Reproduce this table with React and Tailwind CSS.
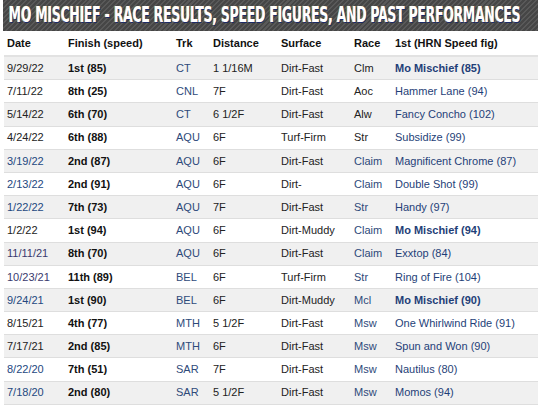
import React from "react";

const BLK = "text-[#222]";
const BLU = "text-[#24487f]";
const PUR = "text-[#3a3a6e]";
const SLT = "text-[#2e4a7a]";

const rows = [
  ["9/29/22", BLK, "1st (85)", "CT", "1 1/16M", "Dirt-Fast", "Clm", BLK, "Mo Mischief (85)", true],
  ["7/11/22", BLK, "8th (25)", "CNL", "7F", "Dirt-Fast", "Aoc", BLK, "Hammer Lane (94)", false],
  ["5/14/22", BLK, "6th (70)", "CT", "6 1/2F", "Dirt-Fast", "Alw", BLK, "Fancy Concho (102)", false],
  ["4/24/22", BLK, "6th (88)", "AQU", "6F", "Turf-Firm", "Str", BLK, "Subsidize (99)", false],
  ["3/19/22", BLU, "2nd (87)", "AQU", "6F", "Dirt-Fast", "Claim", SLT, "Magnificent Chrome (87)", false],
  ["2/13/22", BLU, "2nd (91)", "AQU", "6F", "Dirt-", "Claim", SLT, "Double Shot (99)", false],
  ["1/22/22", BLU, "7th (73)", "AQU", "7F", "Dirt-Fast", "Str", SLT, "Handy (97)", false],
  ["1/2/22", BLK, "1st (94)", "AQU", "6F", "Dirt-Muddy", "Claim", SLT, "Mo Mischief (94)", true],
  ["11/11/21", PUR, "8th (70)", "AQU", "6F", "Dirt-Fast", "Claim", SLT, "Exxtop (84)", false],
  ["10/23/21", PUR, "11th (89)", "BEL", "6F", "Turf-Firm", "Str", SLT, "Ring of Fire (104)", false],
  ["9/24/21", BLU, "1st (90)", "BEL", "6F", "Dirt-Muddy", "Mcl", SLT, "Mo Mischief (90)", true],
  ["8/15/21", BLK, "4th (77)", "MTH", "5 1/2F", "Dirt-Fast", "Msw", SLT, "One Whirlwind Ride (91)", false],
  ["7/17/21", BLK, "2nd (85)", "MTH", "6F", "Dirt-Fast", "Msw", SLT, "Spun and Won (90)", false],
  ["8/22/20", BLU, "7th (51)", "SAR", "7F", "Dirt-Fast", "Msw", SLT, "Nautilus (80)", false],
  ["7/18/20", BLU, "2nd (80)", "SAR", "5 1/2F", "Dirt-Fast", "Msw", SLT, "Momos (94)", false],
];

const cols = "grid grid-cols-[61px_108px_37px_68px_73px_41px_1fr]";

export default function App() {
  return (
    <div className="w-[538px] h-[409px] overflow-hidden bg-white font-['Liberation_Sans',Arial,sans-serif] text-[11px]">
      <div className="ml-[3px] h-[31px] flex items-center overflow-hidden bg-[repeating-linear-gradient(135deg,#464646_0px,#464646_2px,#595959_2px,#595959_3.5px)]">
        <span
          className="inline-block whitespace-nowrap origin-left scale-x-[0.65] pl-[9px] font-['DejaVu_Sans_Condensed','DejaVu_Sans',sans-serif] font-bold text-[21px] leading-none text-white tracking-[-0.2px] [text-shadow:1px_1px_0_#1b2a66,-1px_0_0_#d6b24a]"
        >
          MO MISCHIEF - RACE RESULTS, SPEED FIGURES, AND PAST PERFORMANCES
        </span>
      </div>
      <div className="ml-[4px]">
        <div className={`${cols} h-[26px] items-center font-bold text-[#111] border-b-2 border-[#e2e2e2]`}>
          <div className="pl-[3px]">Date</div>
          <div className="pl-[3px]">Finish (speed)</div>
          <div className="pl-[3px]">Trk</div>
          <div className="pl-[3px]">Distance</div>
          <div className="pl-[3px]">Surface</div>
          <div className="pl-[3px]">Race</div>
          <div className="pl-[3px]">1st (HRN Speed fig)</div>
        </div>
        {rows.map((r, i) => (
          <div
            key={i}
            className={`${cols} h-[23.2px] items-center border-b border-[#dedede] ${i % 2 === 0 ? "bg-[#f0f0f0]" : "bg-white"}`}
          >
            <div className={`pl-[3px] ${r[1]}`}>{r[0]}</div>
            <div className="pl-[3px] font-bold text-[#111]">{r[2]}</div>
            <div className={`pl-[3px] ${SLT}`}>{r[3]}</div>
            <div className="pl-[3px] text-[#222]">{r[4]}</div>
            <div className="pl-[3px] text-[#222]">{r[5]}</div>
            <div className={`pl-[3px] ${r[7]}`}>{r[6]}</div>
            <div className={`pl-[3px] text-[#1f3f78] ${r[9] ? "font-bold" : ""}`}>{r[8]}</div>
          </div>
        ))}
      </div>
    </div>
  );
}
